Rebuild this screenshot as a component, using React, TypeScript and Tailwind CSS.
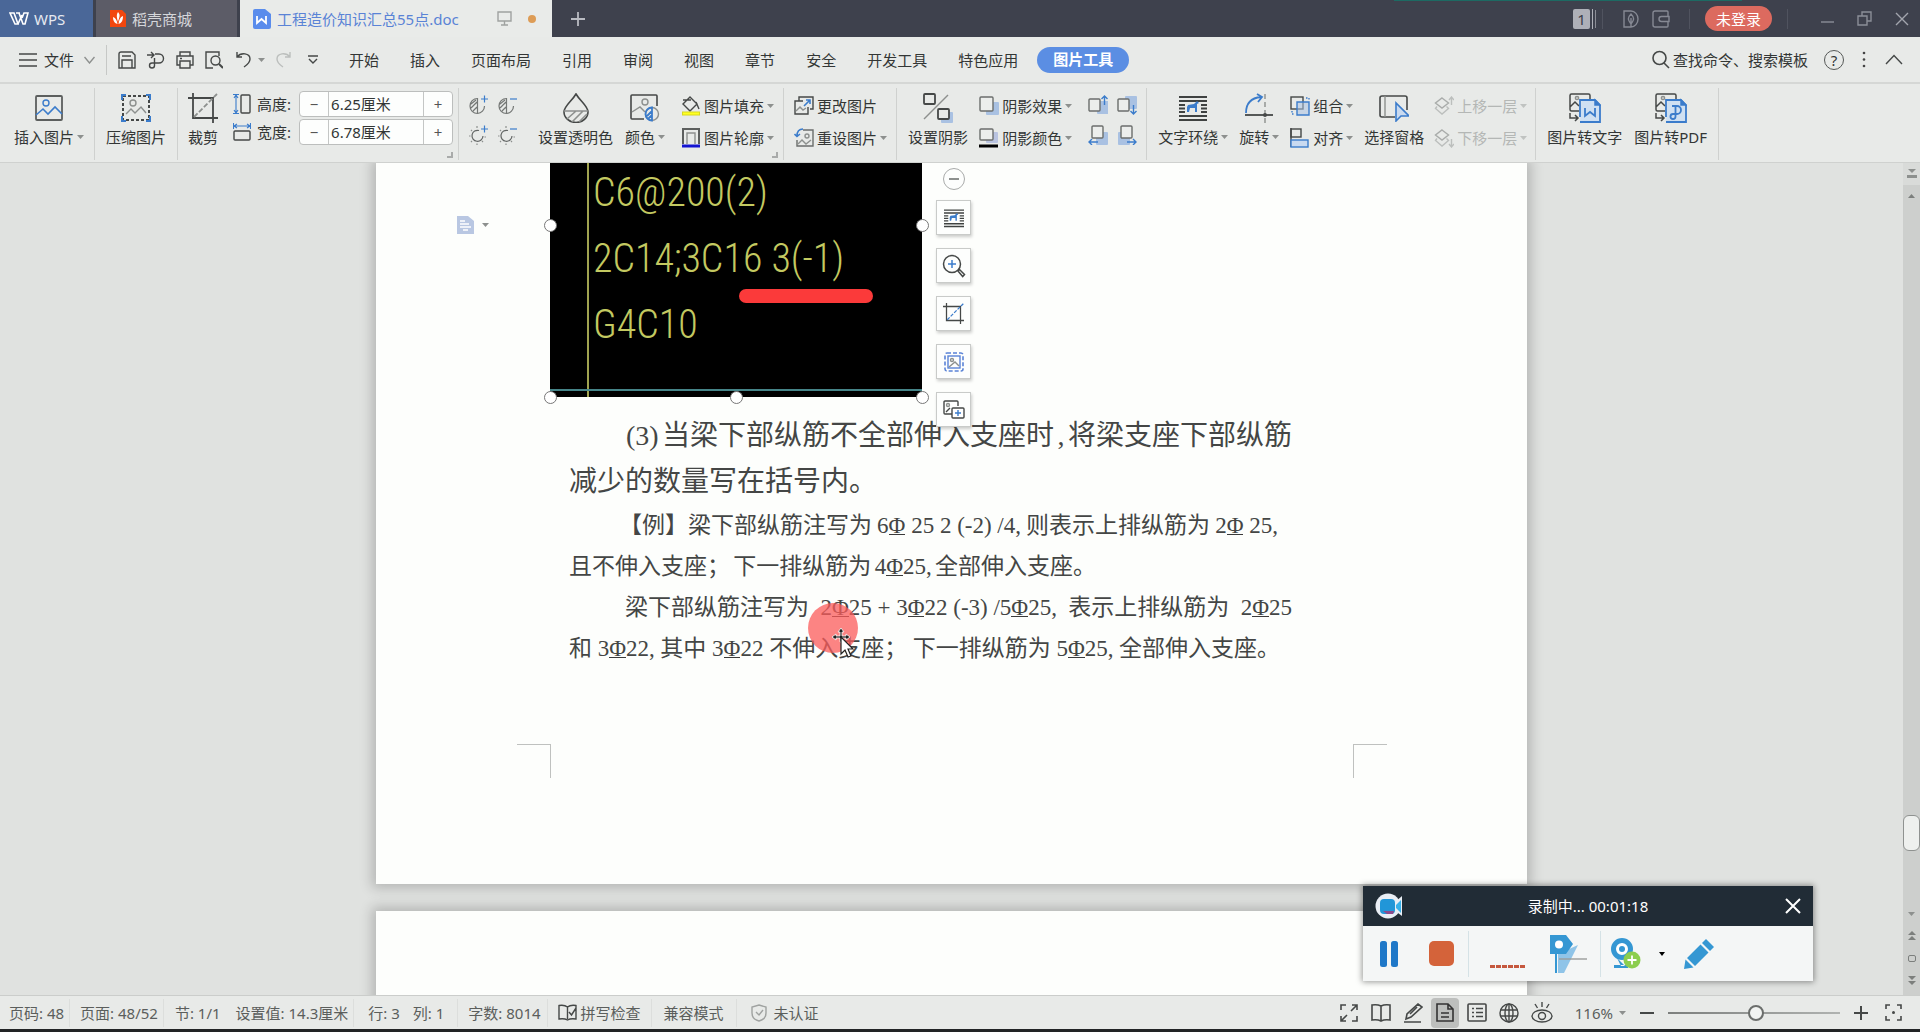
import React, { useState } from 'react';

type SvgProps = { w?: number; h?: number; box?: string; stroke?: string; sw?: number; children: React.ReactNode };

const DARK = '#454847';
const GRAY = '#8d908e';
const BLUE = '#3b7ccb';

const Svg: React.FC<SvgProps> = ({ w = 20, h = 20, box, stroke = DARK, sw = 1.4, children }) => (
  <svg width={w} height={h} viewBox={box || `0 0 ${w} ${h}`} fill="none" stroke={stroke} strokeWidth={sw} className="block shrink-0" aria-hidden="true">
    {children}
  </svg>
);

const Caret: React.FC<{ light?: boolean }> = ({ light }) => (
  <svg width="7" height="4" viewBox="0 0 7 4" className="block shrink-0" aria-hidden="true">
    <path d="M0 0h7L3.500 4z" fill={light ? '#c0c3c1' : '#8d908e'} />
  </svg>
);

// ---- shared drawings ----

const Horse = () => (
  <path d="M6 17v-5l1-2 6-1 3-3 2 2-2 1v8h-2v-4h-5l-1 4z" fill={BLUE} stroke="none" />
);

const WrapIcon: React.FC<{ size?: number }> = ({ size = 28 }) => (
  <Svg w={size} h={size} box="0 0 28 28" sw={2} stroke="#3f4241">
    <path d="M0 3h28M0 7h28M0 22h28M0 26h28" />
    <path d="M0 11h6M22 11h6M0 14.500h6M22 14.500h6M0 18h6M22 18h6" />
    <g transform="translate(2 1)"><Horse /></g>
  </Svg>
);

const CropIcon: React.FC<{ size?: number; line?: string }> = ({ size = 30, line = GRAY }) => (
  <Svg w={size} h={size} box="0 0 30 30" sw={1.8}>
    <path d="M0 5h25v25M5 0v25h25" />
    <path d="M6 24L29 1" stroke={line} strokeDasharray="5 2" />
  </Svg>
);

const Contrast: React.FC<{ plus?: boolean }> = ({ plus }) => (
  <Svg sw={1.2}>
    <path d="M9.500 3.500a7.500 7.500 0 1 0 0 15z M9.500 18.500a7.500 7.500 0 0 0 7-7.500M3 9l5-4M3 13l6-6M5 16l4-4" stroke="#747775" />
    <path d={plus ? 'M13 4h7M16.500 0.500v7' : 'M13 4h7'} stroke={BLUE} />
  </Svg>
);

const Bright: React.FC<{ plus?: boolean }> = ({ plus }) => (
  <Svg sw={1.2}>
    <path d="M11 5.500a5.500 5.500 0 1 0 4 5.500" stroke="#636665" />
    <path d="M9 1v2M9 18.500v1.500M1 11h1.500M3 5l1 1M3 17l1-1M15 17l-1-1M16.500 12h1.500" stroke="#8d908e" />
    <path d={plus ? 'M13 4h7M16.500 0.500v7' : 'M13 4h7'} stroke={BLUE} />
  </Svg>
);

const Shift: React.FC<{ dir: 'up' | 'down' | 'left' | 'right' }> = ({ dir }) => {
  const rects = {
    up: ['9 6', '1 4', 'M16.500 10V1M13.500 4l3-3 3 3'],
    down: ['8 1', '1 4', 'M16.500 10v9M13.500 16l3 3 3-3'],
    left: ['8 7', '4 1', 'M10 17H1M4 14l-3 3 3 3'],
    right: ['1 7', '4 1', 'M10 17h9M16 14l3 3-3 3'],
  }[dir];
  return (
    <Svg sw={1.4}>
      <rect width="12" height="13" rx="1" transform={`translate(${rects[0]})`} fill="#a9c1e2" stroke="none" />
      <rect width="11" height="12" rx="1" transform={`translate(${rects[1]})`} fill="#eceeec" stroke="#6b6e6c" />
      <path d={rects[2]} stroke={BLUE} />
    </Svg>
  );
};

const Layer: React.FC<{ up?: boolean }> = ({ up }) => (
  <Svg stroke="#bcbfbd" sw={1.4}>
    <path d="M8 2l6.500 5L8 12 1.500 7z" stroke="#a9acaa" />
    <path d="M3 10.500l-1.500 2L8 18l6.500-5.500-2-2" />
    <path d={up ? 'M17.500 9V1M15 4l2.500-3L20 4' : 'M17.500 11v8M15 16l2.500 3 2.500-3'} />
  </Svg>
);

const ToDoc: React.FC<{ pdf?: boolean }> = ({ pdf }) => (
  <Svg w={32} h={30} sw={1.5}>
    <path d="M10 18H2.500a1.500 1.500 0 0 1-1.500-1.500v-14A1.500 1.500 0 0 1 2.500 1h17A1.500 1.500 0 0 1 21 2.500V6M1 14l5-5 4 4" />
    <circle cx="8" cy="5" r="1.600" stroke={GRAY} />
    <path d="M1 20v5h8M6 22l3 3-3 3" />
    <path d="M12.500 7H26l5 5v17H11z" fill="#cfe0f2" stroke="none" />
    <path d="M11 24V7h15l5 5v17H11" stroke={BLUE} strokeWidth="1.800" />
    <path d="M26 7v5h5z" stroke={BLUE} fill={BLUE} />
    {pdf ? (
      <path d="M17 13h5a3.500 3.500 0 0 1 0 8h-4a2.500 2.500 0 1 0 2.500 2.500V14" stroke={BLUE} strokeWidth="1.800" />
    ) : (
      <path d="M16 15v8l5-4 5 4v-8" stroke={BLUE} strokeWidth="1.800" />
    )}
  </Svg>
);

// ---- ribbon parts ----

const Big: React.FC<{ icon: React.ReactNode; label: string; caret?: boolean }> = ({ icon, label, caret }) => (
  <button className="flex h-[54px] shrink-0 flex-col items-center justify-between">
    <span className="flex h-[32px] items-center">{icon}</span>
    <span className="flex items-center gap-[3px] leading-[18px]">
      {label}
      {caret && <Caret />}
    </span>
  </button>
);

const Small: React.FC<{ icon: React.ReactNode; label: string; caret?: boolean; off?: boolean }> = ({ icon, label, caret, off }) => (
  <button disabled={off} className={`flex h-[22px] items-center gap-[3px] leading-[20px] ${off ? 'text-[#b4b7b5]' : ''}`}>
    {icon}
    {label}
    {caret && <Caret light={off} />}
  </button>
);

const Stack: React.FC<{ children: React.ReactNode }> = ({ children }) => (
  <div className="flex h-[57px] shrink-0 flex-col justify-between pt-[3px]">{children}</div>
);

const Group: React.FC<{ className: string; corner?: boolean; children: React.ReactNode }> = ({ className, corner, children }) => (
  <div className={`relative flex h-[72px] shrink-0 items-start border-r border-[#cfd1cf] pt-[4px] ${className}`}>
    {children}
    {corner && <span className="absolute right-[5px] bottom-[2px] size-[6px] border-r-2 border-b-2 border-[#a9abaa]" />}
  </div>
);

const Size: React.FC<{ id: string; label: string; icon: React.ReactNode; init: string }> = ({ id, label, icon, init }) => {
  const [value, setValue] = useState(init);
  return (
    <div className="flex h-[26px] items-center">
      {icon}
      <label htmlFor={id} className="ml-[6px] w-[42px]">{label}</label>
      <div className="flex h-[26px] w-[154px] overflow-hidden rounded-[4px] border border-[#bcbebd] bg-[#fdfefd]">
        <button aria-label={`${label} -`} className="w-[29px] border-r border-[#c4c6c5] leading-[22px] text-[#555]">−</button>
        <input id={id} value={value} onChange={(e) => setValue(e.target.value)} className="w-0 flex-1 px-[2px] outline-none" />
        <button aria-label={`${label} +`} className="w-[29px] border-l border-[#c4c6c5] leading-[22px] text-[#555]">+</button>
      </div>
    </div>
  );
};

const TitleBar = () => (
  <header className="relative flex h-[37px] shrink-0 items-stretch bg-[#3e414d] text-[#e6e9f0]">
    <div className="absolute top-0 right-[178px] h-px w-[348px] bg-[#1d6a63]" />
    <button className="flex w-[93px] items-center gap-[5px] bg-[#4a6798] pl-[9px]">
      <Svg w={20} h={14} stroke="#fff" sw={1.6}>
        <path d="M1 1h4l4 11h-3zM7 1h4M6 12h3l4-9M10 1l4 11h2l3-11h-4l-2 5" />
      </Svg>
      WPS
    </button>
    <button className="ml-[3px] flex w-[141px] items-center gap-[6px] bg-[#5c5c67] pl-[14px] text-[#d5d6da]">
      <Svg w={16} h={19} stroke="none">
        <path d="M0 1h12l4 4v13H0z" fill="#f2470f" />
        <path d="M8 3c3 3 1 6 0 10-1-4-2-7 0-10zM3 8c3 1 4 4 4.500 7C4 14 3 11 3 8zM13 7c-3 1-4 4-4.500 8 3.500-1 4.500-4 4.500-8z" fill="#fff" />
      </Svg>
      稻壳商城
    </button>
    <div className="ml-[3px] flex w-[312px] items-center bg-[#e9ebe9] pl-[13px] text-[#5a83d6]">
      <Svg w={18} h={20} stroke="none">
        <path d="M2 0h10l6 5v13a2 2 0 0 1-2 2H2a2 2 0 0 1-2-2V2a2 2 0 0 1 2-2z" fill="#5a8cec" />
        <path d="M4 7v7l4.500-4 4.500 4V7" fill="none" stroke="#fff" strokeWidth="1.800" />
      </Svg>
      <span className="ml-[6px] flex-1">工程造价知识汇总55点.doc</span>
      <Svg w={15} h={15} stroke="#9fa2a0"><path d="M1 1h13v9H1zM7.500 10v4M4 14h7" /></Svg>
      <span className="mr-[16px] ml-[16px] size-[8px] rounded-full bg-[#dd9c56]" />
    </div>
    <button aria-label="新建" className="ml-[18px]">
      <Svg w={16} h={16} stroke="#b9bbc2" sw={1.8}><path d="M8 1v14M1 8h14" /></Svg>
    </button>
    <div className="ml-auto flex items-center pr-[11px]">
      <span className="flex items-center gap-[2px]">
        <span className="h-[20px] w-[17px] rounded-[2px] bg-[#aeb0b8] text-center leading-[20px] text-[#3a3d48]">1</span>
        <span className="h-[20px] w-px bg-[#aeb0b8]" />
        <span className="h-[18px] w-px bg-[#8b8d96]" />
      </span>
      <span className="ml-[6px] h-[20px] w-px bg-[#50535f]" />
      <span className="ml-[20px]"><Svg w={16} h={18} stroke="#868994"><path d="M1 1h7a7 8 0 0 1 0 16H1z M8 4c4 4 3 6 0 10-3-4-4-6 0-10zM8 8v9" /></Svg></span>
      <span className="ml-[13px]"><Svg w={18} h={18} stroke="#868994"><path d="M16 6.500V2a1 1 0 0 0-1-1H3a2 2 0 0 0-2 2v12a2 2 0 0 0 2 2h12a1 1 0 0 0 1-1v-4.500M17 6.500H9.500a2.500 2.500 0 0 0 0 5H17z" /></Svg></span>
      <span className="ml-[19px] h-[20px] w-px bg-[#50535f]" />
      <button className="ml-[15px] h-[25px] w-[67px] rounded-full bg-[#dc6a5f] leading-[24px] text-white">未登录</button>
      <span className="ml-[15px] h-[20px] w-px bg-[#50535f]" />
      <button aria-label="最小化" className="ml-[33px]"><Svg w={13} h={14} stroke="#8b8e98"><path d="M0 10h13" /></Svg></button>
      <button aria-label="还原" className="ml-[23px]"><Svg w={16} h={15} stroke="#8b8e98"><path d="M1 5h9v9H1zM5 5V1h9v9h-4" /></Svg></button>
      <button aria-label="关闭" className="ml-[22px]"><Svg w={14} h={14} stroke="#a3a5ad"><path d="M1 1l12 12M13 1L1 13" /></Svg></button>
    </div>
  </header>
);

const tabs = ['开始', '插入', '页面布局', '引用', '审阅', '视图', '章节', '安全', '开发工具', '特色应用'];

const MenuBar = () => (
  <nav className="flex h-[47px] shrink-0 items-center border-b-2 border-[#d5d7d5] pr-[17px] pl-[19px]">
    <button className="flex items-center gap-[7px]">
      <Svg w={18} h={14}><path d="M0 1h18M0 7h18M0 13h18" /></Svg>
      文件
      <span className="ml-[3px]"><Svg w={11} h={8} stroke={GRAY}><path d="M0.500 1L5.500 7 10.500 1" /></Svg></span>
    </button>
    <span className="ml-[11px] h-[30px] w-px bg-[#c6c8c6]" />
    <div className="ml-[11px] flex items-center gap-[11px]">
      <button aria-label="保存"><Svg w={18} h={18}><path d="M1 3a2 2 0 0 1 2-2h11l3 3v13H1zM4 17V9h10v8M4 5h9" /></Svg></button>
      <button aria-label="输出为PDF"><Svg w={18} h={18}><path d="M0 4h7M4 1l3 3-3 3M8 3h4a4.500 4.500 0 0 1 0 9H5a2.500 2.500 0 1 0 2.500 2.500V7" /></Svg></button>
      <button aria-label="打印"><Svg w={18} h={18}><path d="M4 5V1h10v4M4 14H1V5h16v9h-3M4 10h10v7H4zM4 7.500h2" /></Svg></button>
      <button aria-label="打印预览"><Svg w={18} h={18}><path d="M14 5V1H1v16h7" /><circle cx="10.500" cy="9.500" r="4.500" /><path d="M14 13l4 4" strokeWidth="2" /></Svg></button>
    </div>
    <button aria-label="撤销" className="ml-[13px] flex items-center gap-[6px]">
      <Svg w={16} h={17}><path d="M1 1v5h5M1 6c4-5 13-4 13 2 0 4-3 6-6 8" /></Svg>
      <Caret />
    </button>
    <button aria-label="恢复" className="ml-[10px]"><Svg w={16} h={17} stroke="#bcbfbd"><path d="M15 1v5h-5M15 6C11 1 2 2 2 8c0 4 3 6 6 8" /></Svg></button>
    <button aria-label="更多" className="ml-[16px]"><Svg w={12} h={10}><path d="M1 1h10M2 4l4 4 4-4" /></Svg></button>
    <div className="ml-[30px] flex items-center gap-[31px] whitespace-nowrap">
      {tabs.map((t) => <button key={t}>{t}</button>)}
    </div>
    <button className="ml-[19px] h-[26px] w-[92px] rounded-full bg-[#5b8ee3] leading-[25px] font-bold text-white">图片工具</button>
    <label className="ml-auto flex items-center gap-[3px]">
      <Svg w={18} h={19} sw={1.6}><circle cx="7.500" cy="8" r="6.500" /><path d="M12 13l5 5" /></Svg>
      <input placeholder="查找命令、搜索模板" className="w-[137px] placeholder:text-[#333635] outline-none" />
    </label>
    <button aria-label="帮助" className="ml-[14px] size-[20px] rounded-full border border-[#555857] text-center leading-[18px]">?</button>
    <button aria-label="选项" className="ml-[18px]"><Svg w={4} h={18} stroke="none"><g fill="#444"><circle cx="2" cy="2" r="1.300" /><circle cx="2" cy="8.500" r="1.300" /><circle cx="2" cy="15" r="1.300" /></g></Svg></button>
    <button aria-label="折叠" className="ml-[19px]"><Svg w={18} h={11}><path d="M1 10l8-8.500L17 10" /></Svg></button>
  </nav>
);

const Ribbon = () => (
  <div className="flex h-[78px] shrink-0 overflow-hidden pt-[4px] whitespace-nowrap">
    <Group className="pr-[10px] pl-[14px]">
      <Big label="插入图片" caret icon={<Svg w={28} h={26}><rect x="1" y="1" width="26" height="24" rx="1" stroke="#5c5f5e" strokeWidth="1.800" /><circle cx="11" cy="8" r="3" stroke={BLUE} /><path d="M1 20l7-6 5 5 7-7 7 7" stroke={BLUE} strokeWidth="1.600" /></Svg>} />
    </Group>
    <Group className="px-[11px]">
      <Big label="压缩图片" icon={<Svg w={30} h={28}><rect x="2" y="2" width="26" height="24" strokeDasharray="3 2" strokeWidth="2" /><path d="M1 6V1h4M25 1h4v5M1 22v5h4M25 27h4v-5" stroke={BLUE} strokeWidth="2" /><circle cx="12" cy="9" r="3" stroke={GRAY} /><path d="M5 20l5-5 4 4 6-6 5 6" stroke={GRAY} /></Svg>} />
    </Group>
    <Group className="pr-[5px] pl-[10px]" corner>
      <Big label="裁剪" icon={<CropIcon />} />
      <div className="-mt-px ml-[15px] flex flex-col gap-[2px]">
        <Size id="pic-h" label="高度:" init="6.25厘米" icon={<Svg w={18} h={20}><rect x="8" y="1" width="9" height="18" rx="1" /><path d="M3 1v18M1 4l2-3 2 3M1 16l2 3 2-3M0 0.500h6M0 19.500h6" stroke={BLUE} strokeWidth="1.100" /></Svg>} />
        <Size id="pic-w" label="宽度:" init="6.78厘米" icon={<Svg w={18} h={18}><rect x="1" y="8" width="16" height="9" rx="1" /><path d="M1 3h16M4 1L1 3l3 2M14 1l3 2-3 2M0.500 0v6M17.500 0v6" stroke={BLUE} strokeWidth="1.100" /></Svg>} />
      </div>
    </Group>
    <Group className="pr-[9px] pl-[9px]" corner>
      <div className="grid grid-cols-2 gap-x-[9px] gap-y-[10px] pt-[3px]">
        <button aria-label="增加对比度"><Contrast plus /></button>
        <button aria-label="降低对比度"><Contrast /></button>
        <button aria-label="增加亮度"><Bright plus /></button>
        <button aria-label="降低亮度"><Bright /></button>
      </div>
      <div className="ml-[21px] flex gap-[12px]">
        <Big label="设置透明色" icon={<Svg w={26} h={30} sw={1.6}><path d="M13 1C9 8 1 13 1 19a12 10.500 0 0 0 24 0C25 13 17 8 13 1z" /><path d="M1 18h24M4 26l9-8M9 29l11-11M16 29l8-8" stroke={GRAY} /></Svg>} />
        <Big label="颜色" caret icon={<Svg w={30} h={28}><path d="M14 25H2a1 1 0 0 1-1-1V2a1 1 0 0 1 1-1h24a1 1 0 0 1 1 1v10" strokeWidth="1.600" /><circle cx="15" cy="8" r="3" stroke={GRAY} /><path d="M2 18l8-5 5 5" stroke={GRAY} /><circle cx="22" cy="20" r="6.500" stroke={GRAY} /><path d="M22 13.500a6.500 6.500 0 0 0 0 13z M17 22l5-5M18 25l4-4" stroke={BLUE} strokeWidth="1.800" /></Svg>} />
      </div>
      <div className="ml-[16px]">
        <Stack>
          <Small label="图片填充" caret icon={<Svg><path d="M9 1l7 7-7 7-7-7zM2 4h8M15 6l3 7" /><path d="M1 17.500h18" stroke="#d9d91c" strokeWidth="4" /><path d="M2 17.500h16" stroke="#ffff21" strokeWidth="2" /></Svg>} />
          <Small label="图片轮廓" caret icon={<Svg><path d="M2 16V1h16v15" stroke="#5c5f5e" strokeWidth="2" /><path d="M6 16V5h8v11" stroke={GRAY} /><path d="M1 18h18" stroke="#1414d2" strokeWidth="3" /></Svg>} />
        </Stack>
      </div>
    </Group>
    <Group className="pr-[9px] pl-[10px]">
      <Stack>
        <Small label="更改图片" icon={<Svg><path d="M5 5V1h14v12h-3M14 11v7H1V5h8" /><path d="M2 15l4-4 3 3 3-2" stroke={GRAY} /><path d="M10 10l6-6M12 4h4v4" stroke={BLUE} strokeWidth="1.600" /></Svg>} />
        <Small label="重设图片" caret icon={<Svg><path d="M9 2h10v16H3v-6" stroke="#6b6e6c" /><path d="M4 16l4-4 4 4 5-4" stroke={GRAY} /><circle cx="13" cy="8" r="2" stroke={GRAY} /><path d="M9 1C5 1 3 3 3 8M0.500 6L3 8.500 6 6" stroke={BLUE} strokeWidth="1.600" /></Svg>} />
      </Stack>
    </Group>
    <Group className="pr-[9px] pl-[11px]">
      <Big label="设置阴影" icon={<Svg w={30} h={30} sw={1.8}><rect x="1" y="1" width="11" height="10" rx="1" /><path d="M25 2L1 26" stroke={GRAY} strokeWidth="1.400" /><rect x="18" y="19" width="12" height="11" rx="1" fill="#a9c1e2" stroke="none" /><rect x="15" y="16" width="11" height="10" rx="1" fill="#e8eae8" /></Svg>} />
      <div className="ml-[11px]">
        <Stack>
          <Small label="阴影效果" caret icon={<Svg><rect x="7" y="6" width="13" height="13" rx="1" fill="#a9c1e2" stroke="none" /><rect x="1" y="1" width="13" height="14" rx="1" fill="#eceeec" stroke="#6b6e6c" /></Svg>} />
          <Small label="阴影颜色" caret icon={<Svg><rect x="7" y="4" width="12" height="11" rx="1" fill="#b9c3e0" stroke="none" /><rect x="1" y="1" width="13" height="11" rx="1" fill="#eceeec" stroke="#6b6e6c" /><path d="M0 18h19" stroke="#000" strokeWidth="3" /></Svg>} />
        </Stack>
      </div>
      <div className="ml-[16px] grid grid-cols-2 gap-x-[9px] gap-y-[10px] pt-[3px]">
        <button aria-label="上移阴影"><Shift dir="up" /></button>
        <button aria-label="下移阴影"><Shift dir="down" /></button>
        <button aria-label="左移阴影"><Shift dir="left" /></button>
        <button aria-label="右移阴影"><Shift dir="right" /></button>
      </div>
    </Group>
    <Group className="pr-[8px] pl-[11px]">
      <div className="flex gap-[11px]">
        <Big label="文字环绕" caret icon={<WrapIcon />} />
        <Big label="旋转" caret icon={<Svg w={30} h={30}><path d="M2 20C2 11 6 5 17 4M13 1l5 3-4 5" stroke={BLUE} strokeWidth="1.800" /><path d="M21 1v29" stroke={GRAY} strokeDasharray="5 3" /><path d="M1 22h28" strokeWidth="1.800" /><circle cx="21" cy="22" r="2" fill={DARK} stroke="none" /></Svg>} />
        <Stack>
          <Small label="组合" caret icon={<Svg><rect x="1" y="1" width="12" height="12" /><path d="M7 6h12v13H7z" stroke={BLUE} fill="#a9c1e288" /><path d="M16 2h3v2M2 15v3h3" stroke={BLUE} strokeDasharray="1.500 1.500" /></Svg>} />
          <Small label="对齐" caret icon={<Svg><path d="M1 0v19" /><rect x="1" y="1" width="10" height="8" /><rect x="1" y="12" width="17" height="7" stroke={BLUE} fill="#c9daf0" /></Svg>} />
        </Stack>
        <Big label="选择窗格" icon={<Svg w={30} h={28}><path d="M16 23H3a2 2 0 0 1-2-2V4a2 2 0 0 1 2-2h23a2 2 0 0 1 2 2v12" strokeWidth="1.600" /><path d="M6 2v21" stroke={GRAY} /><path d="M17 9v18l5-5h8z" fill="#c9daf0" stroke={BLUE} strokeWidth="1.600" /></Svg>} />
        <div className="-ml-px">
          <Stack>
            <Small off label="上移一层" caret icon={<Layer up />} />
            <Small off label="下移一层" caret icon={<Layer />} />
          </Stack>
        </div>
      </div>
    </Group>
    <Group className="gap-[12px] px-[11px]">
      <Big label="图片转文字" icon={<ToDoc />} />
      <Big label="图片转PDF" icon={<ToDoc pdf />} />
    </Group>
  </div>
);

// ---- document ----

const Rebar: React.FC<{ n: string; d: string }> = ({ n, d }) => (
  <>{n}<span className="inline-block border-b border-[#3a3a3a] leading-[17px]">Φ</span>{d}</>
);

const Handle: React.FC<{ className: string }> = ({ className }) => (
  <span className={`absolute size-[13px] rounded-full border border-[#777] bg-white ${className}`} />
);

const Tool: React.FC<{ label: string; children: React.ReactNode }> = ({ label, children }) => (
  <button aria-label={label} className="flex size-[35px] items-center justify-center border border-[#c9cbc9] bg-[#fdfefd] shadow-[1px_2px_3px_rgba(0,0,0,0.2)]">
    {children}
  </button>
);

const Picture = () => (
  <div className="relative h-[234px] w-[372px] bg-black font-[Roboto_Condensed,Liberation_Mono,monospace] text-[40px] leading-[66px] font-light text-[#c3c961]">
    <div className="absolute inset-y-0 left-[37px] w-[2px] bg-[#a0a350]" />
    <div className="absolute inset-x-0 bottom-[6px] h-[2px] bg-[#458488]" />
    <div className="overflow-hidden pl-[43px] whitespace-pre">
      <p className="-mt-[3px]">C6@200(2)</p>
      <p>2C14;3C16 3(-1)</p>
      <p>G4C10</p>
    </div>
    <div className="absolute top-[126px] left-[189px] h-[14px] w-[134px] rounded-full bg-[#fb3a3a]" />
    <Handle className="top-[56px] -left-[6px]" />
    <Handle className="top-[56px] -right-[7px]" />
    <Handle className="-bottom-[7px] -left-[6px]" />
    <Handle className="-bottom-[7px] left-[180px]" />
    <Handle className="-right-[7px] -bottom-[7px]" />
    <button aria-label="段落布局" className="absolute top-[53px] -left-[93px] flex items-center gap-[8px]">
      <Svg w={17} h={18} stroke="none">
        <path d="M0 0h11l6 5v13H0z" fill="#b9c7e2" />
        <path d="M3 5h5M3 8h9M3 11h11M6 14h5" stroke="#fff" strokeWidth="1.400" />
      </Svg>
      <Caret />
    </button>
    <div className="absolute top-[5px] left-[386px] z-10 flex flex-col items-center gap-[13px]">
      <button aria-label="收起" className="-mb-[3px] flex size-[22px] items-center justify-center rounded-full border border-[#a9abaa] bg-[#fdfefd]">
        <span className="h-[2px] w-[10px] bg-[#8d908e]" />
      </button>
      <Tool label="布局选项"><WrapIcon size={20} /></Tool>
      <Tool label="查看大图"><Svg w={24} h={24} sw={1.5}><circle cx="10" cy="10" r="8.500" /><path d="M10 6v8M6 10h8" stroke={BLUE} /><path d="M16 17l1.500-1.500 5 5-1.800 2z" /></Svg></Tool>
      <Tool label="裁剪图片"><CropIcon size={21} line={BLUE} /></Tool>
      <Tool label="图片边框"><Svg w={20} h={20} stroke="#5a83d6"><rect x="1" y="1" width="18" height="18" rx="2" strokeDasharray="4 2" strokeWidth="1.600" /><rect x="4" y="4" width="12" height="12" /><circle cx="8" cy="8" r="1.500" stroke={GRAY} /><path d="M5 15l6-5 4 4" stroke={GRAY} /></Svg></Tool>
      <Tool label="更多图片"><Svg w={22} h={20}><path d="M9 14H2a1 1 0 0 1-1-1V2a1 1 0 0 1 1-1h12a1 1 0 0 1 1 1v4M3 12l4-4" /><circle cx="5" cy="5" r="1.500" stroke={GRAY} /><rect x="9" y="8" width="12" height="10" rx="1" fill="#fff" /><path d="M15 10v6M12 13h6" stroke={BLUE} /></Svg></Tool>
    </div>
  </div>
);

const Line: React.FC<{ className?: string; children: React.ReactNode }> = ({ className = '', children }) => (
  <p className={`flex justify-between ${className}`}>{children}</p>
);

const Scan = () => (
  <div className="mt-[16px] ml-[19px] w-[723px] font-[Liberation_Serif,Noto_Sans_CJK_SC,serif] whitespace-nowrap text-[#444645]">
    <div className="text-[28px] leading-[46px]">
      <Line className="pl-[57px]"><span>(3)</span><span>当梁下部纵筋不全部伸入支座时</span><span>,</span><span>将梁支座下部纵筋</span></Line>
      <Line>减少的数量写在括号内。</Line>
    </div>
    <div className="text-[23px] leading-[41px]">
      <Line className="pr-[14px] pl-[50px]">
        <span>【例】梁下部纵筋注写为</span><span><Rebar n="6" d=" 25 2 " />(-2) /4,</span><span>则表示上排纵筋为</span><span><Rebar n="2" d=" 25," /></span>
      </Line>
      <Line className="pr-[196px]">
        <span>且不伸入支座；</span><span>下一排纵筋为</span><span><Rebar n="4" d="25," /></span><span>全部伸入支座。</span>
      </Line>
      <Line className="pl-[56px]">
        <span>梁下部纵筋注写为</span><span><Rebar n="2" d="25" /> + <Rebar n="3" d="22" /> (-3) /<Rebar n="5" d="25," /></span><span>表示上排纵筋为</span><span><Rebar n="2" d="25" /></span>
      </Line>
      <Line className="pr-[12px]">
        <span>和 <Rebar n="3" d="22," /></span><span>其中 <Rebar n="3" d="22" /> 不伸入支座；</span><span>下一排纵筋为 <Rebar n="5" d="25," /></span><span>全部伸入支座。</span>
      </Line>
    </div>
  </div>
);

const Document = () => (
  <main className="relative flex min-h-0 flex-1 overflow-hidden border-t border-[#cfd1cf] bg-[#e0e2e0]">
    <div className="flex min-w-0 flex-1 flex-col items-center gap-[27px]">
      <article className="relative h-[721px] w-[1151px] shrink-0 bg-[#fdfefc] pl-[174px] shadow-[0_0_12px_4px_rgba(0,0,0,0.2)]">
        <Picture />
        <Scan />
        <div className="mt-[75px] -ml-[33px] flex w-[870px] justify-between">
          <span className="size-[34px] border-t border-r border-[#bfc1bf]" />
          <span className="size-[34px] border-t border-l border-[#bfc1bf]" />
        </div>
        {/* click highlight and pointer */}
        <div className="absolute top-[440px] left-[432px] size-[50px] rounded-full bg-[#fb5b5b]/75" />
        <div className="absolute top-[465px] left-[456px]">
          <Svg w={22} h={32} stroke="#fff" sw={0.8}>
            <path d="M9 0l3 4h-2v4h4V6l4 3-4 3v-2h-4v4L8 14V10H4v2L0 9l4-3v2h4V4H6z" fill="#222" />
            <path d="M9 9v17l4-4 3 7 3-1-3-7h5z" fill="#fff" stroke="#222" strokeWidth="1.200" />
          </Svg>
        </div>
      </article>
      <article className="h-[720px] w-[1151px] shrink-0 bg-[#fdfefc] shadow-[0_0_12px_4px_rgba(0,0,0,0.2)]" />
    </div>
    <aside className="flex w-[17px] shrink-0 flex-col items-center bg-[#cdcfcd]">
      <div className="flex h-[22px] w-full items-center justify-center bg-[#d9dbd9]">
        <Svg w={10} h={10} stroke="none"><path d="M1 0h8L5 4zM0 6h10v3H0z" fill="#8d908e" /></Svg>
      </div>
      <button aria-label="向上滚动" className="mt-[9px]"><Svg w={7} h={4} stroke="none"><path d="M0 4h7L3.500 0z" fill="#7c7f7d" /></Svg></button>
      <div className="flex-1" />
      <div className="h-[36px] w-[17px] rounded-[6px] border border-[#8f9290] bg-[#eef0ee]" />
      <button aria-label="向下滚动" className="mt-[61px]"><Caret /></button>
      <button aria-label="上一页" className="mt-[15px]"><Svg w={8} h={10} stroke="none"><path d="M0 4h8L4 0zM0 9h8L4 5z" fill="#7c7f7d" /></Svg></button>
      <button aria-label="选择浏览对象" className="mt-[14px] h-[7px] w-[8px] rounded-[2px] border border-[#7c7f7d]" />
      <button aria-label="下一页" className="mt-[14px] mb-[9px]"><Svg w={8} h={10} stroke="none"><path d="M0 0h8L4 4zM0 5h8L4 9z" fill="#7c7f7d" /></Svg></button>
    </aside>
  </main>
);

const Sep = () => <span className="h-[28px] w-px bg-[#dcdedc]" />;

const StatusBar = () => {
  const [zoom, setZoom] = useState(51);
  return (
    <footer className="flex h-[34px] shrink-0 items-center border-t border-[#cbcdcb] pr-[18px] pl-[9px] whitespace-nowrap text-[#5b5e5c]">
      <div className="flex items-center gap-[5px]">
        <span>页码: 48</span><Sep />
        <span className="pl-[5px]">页面: 48/52</span><Sep />
        <span className="pl-[6px]">节: 1/1</span>
        <span className="pl-[10px]">设置值: 14.3厘米</span><Sep />
        <span className="pl-[9px]">行: 3</span>
        <span className="pr-[8px] pl-[8px]">列: 1</span><Sep />
        <span className="pr-[1px] pl-[5px]">字数: 8014</span><Sep />
        <button className="flex items-center gap-[4px] px-[5px]">
          <Svg w={19} h={17}><path d="M9.500 3v12M9.500 3C7 1 4 1 1 1.500V15c3-.5 6-.5 8.500 1 2.500-1.500 5.500-1.500 8.500-1V1.500C15 1 12 1 9.500 3zM11 8l2.500 3L18 4" /></Svg>
          拼写检查
        </button>
        <Sep />
        <span className="px-[7px]">兼容模式</span><Sep />
        <button className="flex items-center gap-[7px] pl-[9px]">
          <Svg w={16} h={18} stroke="#9fa2a0"><path d="M8 1l7 2v6c0 4-3 7-7 8-4-1-7-4-7-8V3zM5 8l3 3 4-5" /></Svg>
          未认证
        </button>
      </div>
      <div className="ml-auto flex items-center">
        <div className="flex items-center gap-[12px]">
          <button aria-label="全屏显示"><Svg w={20} h={20} sw={1.6}><path d="M7 2H2v5M13 2h5v5M7 18H2v-5M13 18h5v-5M18 2l-6 6M2 18l6-6" /></Svg></button>
          <button aria-label="阅读版式"><Svg w={20} h={20} sw={1.6}><path d="M10 3v15M10 3C7 1.500 4 1.500 1 2v15c3-.5 6-.5 9 1 3-1.500 6-1.500 9-1V2c-3-.5-6-.5-9 1z" /></Svg></button>
          <button aria-label="写作模式"><Svg w={20} h={20} sw={1.6}><path d="M3 16l1-5L15 1l4 3L8 14zM7 11l7-7M1 19h17" /></Svg></button>
          <button aria-label="页面视图" className="-mx-[4px] flex h-[30px] w-[28px] items-center justify-center rounded-[4px] bg-[#bdbfbd]"><Svg w={18} h={19} sw={1.6} stroke="#333"><path d="M1 1h11l5 5v12H1zM12 1v5h5M5 10h8M5 14h8" /></Svg></button>
          <button aria-label="大纲"><Svg w={20} h={19} sw={1.6}><rect x="1" y="1" width="18" height="17" rx="1" /><path d="M5 5.500h2M5 9.500h2M5 13.500h2M9 5.500h7M9 9.500h7M9 13.500h7" /></Svg></button>
          <button aria-label="Web版式"><Svg w={20} h={20}><circle cx="10" cy="10" r="9" /><ellipse cx="10" cy="10" rx="4" ry="9" /><path d="M1.500 7h17M1.500 13h17M10 1v18" /></Svg></button>
          <button aria-label="护眼模式"><Svg w={22} h={21}><ellipse cx="11" cy="14" rx="10" ry="6" /><circle cx="11" cy="14" r="3.500" /><path d="M11 0v5M4 2l2.500 4M18 2l-2.500 4" /></Svg></button>
        </div>
        <span className="mx-[11px]"><Sep /></span>
        <button className="flex items-center gap-[6px]">116% <Caret /></button>
        <button aria-label="缩小" className="ml-[14px]"><Svg w={14} h={14} sw={2}><path d="M0 7h14" /></Svg></button>
        <input
          type="range"
          aria-label="显示比例"
          value={zoom}
          onChange={(e) => setZoom(Number(e.target.value))}
          className="mx-[14px] h-[18px] w-[172px] appearance-none bg-linear-to-r from-[#7c7f7d] to-[#b0b3b1] bg-[length:100%_2px] bg-center bg-no-repeat [&::-webkit-slider-thumb]:size-[16px] [&::-webkit-slider-thumb]:appearance-none [&::-webkit-slider-thumb]:rounded-full [&::-webkit-slider-thumb]:border-2 [&::-webkit-slider-thumb]:border-[#6b6e6c] [&::-webkit-slider-thumb]:bg-[#f2f4f2]"
        />
        <button aria-label="放大"><Svg w={14} h={14} sw={2}><path d="M0 7h14M7 0v14" /></Svg></button>
        <button aria-label="最佳显示比例" className="ml-[17px]"><Svg w={17} h={17} sw={1.6}><path d="M5 1H1v4M12 1h4v4M5 16H1v-4M12 16h4v-4" /><circle cx="8.500" cy="8.500" r="1.500" fill={DARK} stroke="none" /></Svg></button>
      </div>
    </footer>
  );
};

const Recorder = () => (
  <section className="absolute right-[107px] bottom-[51px] z-20 w-[450px] bg-[#f4f6f6] shadow-[0_0_6px_1px_rgba(0,0,0,0.4)]">
    <div className="flex h-[40px] items-center justify-between bg-[#212c36] pr-[12px] pl-[12px] text-white">
      <Svg w={28} h={26} stroke="none">
        <circle cx="13" cy="13" r="12.500" fill="#e9eef5" />
        <path d="M19 10l8-7v20l-8-6z" fill="#e9eef5" />
        <rect x="5" y="6" width="15" height="15" rx="4" fill="#2196d8" />
        <path d="M8 18l4 3h6l1-3z" fill="#8c4a8c" />
        <path d="M21 12l5-5v13l-5-5z" fill="#38b1ea" />
      </Svg>
      <span>录制中... 00:01:18</span>
      <button aria-label="关闭录制" className="flex w-[28px] justify-end"><Svg w={16} h={16} stroke="#fff" sw={2}><path d="M1 1l14 14M15 1L1 15" /></Svg></button>
    </div>
    <div className="flex h-[55px] items-center pl-[17px]">
      <button aria-label="暂停"><Svg w={19} h={26} stroke="none"><rect width="7" height="26" rx="2.500" fill="#1f78c8" /><rect x="11" width="7" height="26" rx="2.500" fill="#1f78c8" /></Svg></button>
      <button aria-label="停止" className="ml-[30px] size-[25px] rounded-[5px] bg-[#d4633a]" />
      <span className="ml-[14px] h-[46px] w-px bg-[#d5e2e6]" />
      <span className="ml-[21px] self-end pb-[13px]"><Svg w={35} h={3} stroke="#c5583e" sw={3}><path d="M0 1.500h35" strokeDasharray="5 1" /></Svg></span>
      <button aria-label="音量" className="ml-[25px]">
        <Svg w={38} h={40} stroke="none">
          <path d="M8 20L28 11 14 39H8z" fill="#8fc4e8" />
          <path d="M0 1h16l7 9-7 10H7v19H5V20H0z" fill="#3597d3" />
          <circle cx="9" cy="10.500" r="4" fill="#fff" />
          <path d="M9 25h28" stroke="#9a9c9b" />
        </Svg>
      </button>
      <span className="ml-[12px] h-[46px] w-px bg-[#d5e2e6]" />
      <button aria-label="摄像头" className="ml-[10px]">
        <Svg w={30} h={31} stroke="none">
          <path d="M3 27h14v3H3zM6 20l4 8h4z" fill="#3597d3" />
          <circle cx="11" cy="11" r="8.500" fill="#fff" stroke="#3597d3" strokeWidth="5" />
          <circle cx="11" cy="11" r="3" fill="#3597d3" />
          <circle cx="21" cy="22" r="8.500" fill="#8cce4f" />
          <path d="M21 17.500v9M16.500 22h9" stroke="#fff" strokeWidth="1.800" />
        </Svg>
      </button>
      <span className="ml-[18px]"><Svg w={6} h={4} stroke="none"><path d="M0 0h6L3 4z" fill="#000" /></Svg></span>
      <button aria-label="画笔" className="ml-[19px]">
        <Svg w={30} h={30} stroke="none">
          <path d="M22 0l8 8-4 4-8-8zM16.500 5.500l8 8L11 27l-8-8zM1.500 20.500L9.500 28.500 0 30z" fill="#3597d3" />
        </Svg>
      </button>
    </div>
  </section>
);

const App: React.FC = () => (
  <div className="relative flex h-screen flex-col overflow-hidden bg-[#e8eae8] font-[Noto_Sans,Noto_Sans_CJK_SC,sans-serif] text-[15px] leading-[20px] text-[#333635]">
    <TitleBar />
    <MenuBar />
    <Ribbon />
    <Document />
    <StatusBar />
    <div className="h-[3px] shrink-0 bg-[#222425]" />
    <Recorder />
  </div>
);

export default App;
